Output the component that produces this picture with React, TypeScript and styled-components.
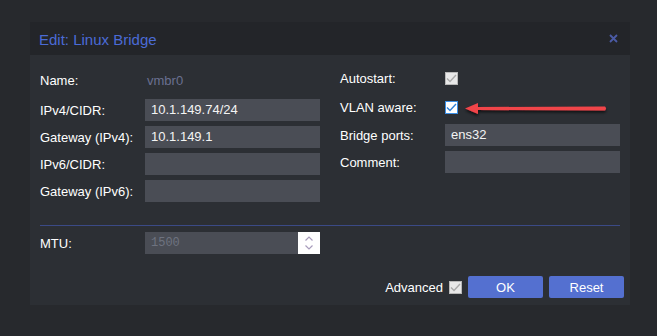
import styled, { createGlobalStyle } from "styled-components";

const GlobalStyle = createGlobalStyle`
  html, body {
    margin: 0;
    padding: 0;
    background: #27292d;
  }
  body {
    font-family: "Liberation Sans", Arial, sans-serif;
    font-size: 13px;
  }
`;

const Check = ({ on }: { on?: boolean }) => (
  <CheckBox $on={on}>
    <svg width="11" height="9" viewBox="0 0 11 9">
      <path
        d="M1 4.5 L4 7.5 L10 1"
        fill="none"
        stroke={on ? "#2f80d8" : "#a9a9a9"}
        strokeWidth="1.4"
      />
    </svg>
  </CheckBox>
);

const App = () => {
  return (
    <Page>
      <GlobalStyle />
      <Dialog>
        <Header>
          <Title>Edit: Linux Bridge</Title>
          <Close>
            <svg width="9" height="9" viewBox="0 0 9 9">
              <path d="M1 1 L8 8 M8 1 L1 8" stroke="#4b5ba6" strokeWidth="1.8" />
            </svg>
          </Close>
        </Header>
        <Body>
          <Columns>
            <Column>
              <Row $h={28}>
                <Label>Name:</Label>
                <Static>vmbr0</Static>
              </Row>
              <Row $h={22}>
                <Label>IPv4/CIDR:</Label>
                <Input>10.1.149.74/24</Input>
              </Row>
              <Row $h={22}>
                <Label>Gateway (IPv4):</Label>
                <Input>10.1.149.1</Input>
              </Row>
              <Row $h={22}>
                <Label>IPv6/CIDR:</Label>
                <Input />
              </Row>
              <Row $h={22}>
                <Label>Gateway (IPv6):</Label>
                <Input />
              </Row>
            </Column>
            <Column>
              <Row $h={24}>
                <Label>Autostart:</Label>
                <Check />
              </Row>
              <Row $h={24}>
                <Label>VLAN aware:</Label>
                <Check on />
              </Row>
              <Row $h={22}>
                <Label>Bridge ports:</Label>
                <Input>ens32</Input>
              </Row>
              <Row $h={22}>
                <Label>Comment:</Label>
                <Input />
              </Row>
            </Column>
          </Columns>
          <Separator />
          <Row $h={22}>
            <Label>MTU:</Label>
            <Input $disabled>
              <MonoValue>1500</MonoValue>
              <Spinner>
                <svg width="10" height="16" viewBox="0 0 10 16">
                  <path d="M1.5 5.5 L5 2 L8.5 5.5 M1.5 10.5 L5 14 L8.5 10.5" fill="none" stroke="#a89cbc" strokeWidth="1.2" />
                </svg>
              </Spinner>
            </Input>
          </Row>
        </Body>
        <Footer>
          <Advanced>Advanced</Advanced>
          <Check />
          <Button>OK</Button>
          <Button>Reset</Button>
        </Footer>
        <Arrow>
          <svg width="150" height="20" viewBox="0 0 150 20">
            <defs>
              <filter id="sh" x="-10%" y="-50%" width="120%" height="200%">
                <feDropShadow dx="0" dy="2" stdDeviation="1.5" floodColor="#000" floodOpacity="0.7" />
              </filter>
            </defs>
            <g filter="url(#sh)">
              <path d="M14 8 L142 7.5 Q144 9.5 142 11.5 L14 11 Z" fill="#f0444a" />
              <path d="M2 9.5 L15 4 L15 15 Z" fill="#f0444a" />
            </g>
          </svg>
        </Arrow>
      </Dialog>
    </Page>
  );
};

export default App;

const Page = styled.div`
  width: 657px;
  height: 336px;
  padding: 22px 0 0 30px;
  box-sizing: border-box;
  overflow: hidden;
`;

const Dialog = styled.div`
  position: relative;
  width: 600px;
  height: 283px;
  background: #2c2f34;
  display: flex;
  flex-direction: column;
`;

const Header = styled.div`
  height: 33px;
  background: #232529;
  display: flex;
  align-items: center;
  justify-content: space-between;
  padding: 0 12px 0 9px;
`;

const Title = styled.div`
  font-size: 15px;
  color: #4b6bd6;
  padding-top: 1px;
`;

const Close = styled.div`
  display: flex;
  width: 9px;
  height: 9px;
`;

const Body = styled.div`
  padding: 11px 10px 0 10px;
  display: flex;
  flex-direction: column;
`;

const Columns = styled.div`
  display: flex;
  gap: 20px;
`;

const Column = styled.div`
  width: 280px;
  display: flex;
  flex-direction: column;
  gap: 5px;
`;

const Row = styled.div<{ $h: number }>`
  height: ${(p) => p.$h}px;
  display: flex;
  align-items: center;
`;

const Label = styled.div`
  width: 105px;
  flex-shrink: 0;
  color: #ffffff;
`;

const Static = styled.div`
  padding-left: 2px;
  color: #6a7090;
`;

const Input = styled.div<{ $disabled?: boolean }>`
  width: 175px;
  height: 22px;
  box-sizing: border-box;
  background: #4a4d55;
  color: #f4f4f4;
  padding-left: 6px;
  display: flex;
  align-items: center;
  justify-content: space-between;
  line-height: 22px;
`;

const MonoValue = styled.span`
  font-family: "Liberation Mono", monospace;
  font-size: 12px;
  color: #6e7380;
`;

const Spinner = styled.div`
  width: 22px;
  height: 22px;
  background: #ffffff;
  display: flex;
  align-items: center;
  justify-content: center;
`;

const CheckBox = styled.div<{ $on?: boolean }>`
  width: 13px;
  height: 13px;
  box-sizing: border-box;
  background: ${(p) => (p.$on ? "#ffffff" : "#e8e8e8")};
  border: 1px solid ${(p) => (p.$on ? "#3b8fe6" : "#b8b8b8")};
  display: flex;
  align-items: center;
  justify-content: center;
`;

const Separator = styled.div`
  height: 1px;
  background: #3b4a86;
  margin: 23px 0 6px 0;
`;

const Footer = styled.div`
  margin-top: auto;
  display: flex;
  align-items: center;
  justify-content: flex-end;
  padding: 0 6px 7px 0;
  gap: 6px;
`;

const Advanced = styled.div`
  color: #ffffff;
`;

const Button = styled.div`
  width: 75px;
  height: 22px;
  border-radius: 2px;
  background: #5470d0;
  color: #ffffff;
  display: flex;
  align-items: center;
  justify-content: center;
  &:first-of-type {
    margin-left: 1px;
  }
`;

const Arrow = styled.div`
  position: absolute;
  left: 433px;
  top: 77px;
  width: 150px;
  height: 20px;
`;
